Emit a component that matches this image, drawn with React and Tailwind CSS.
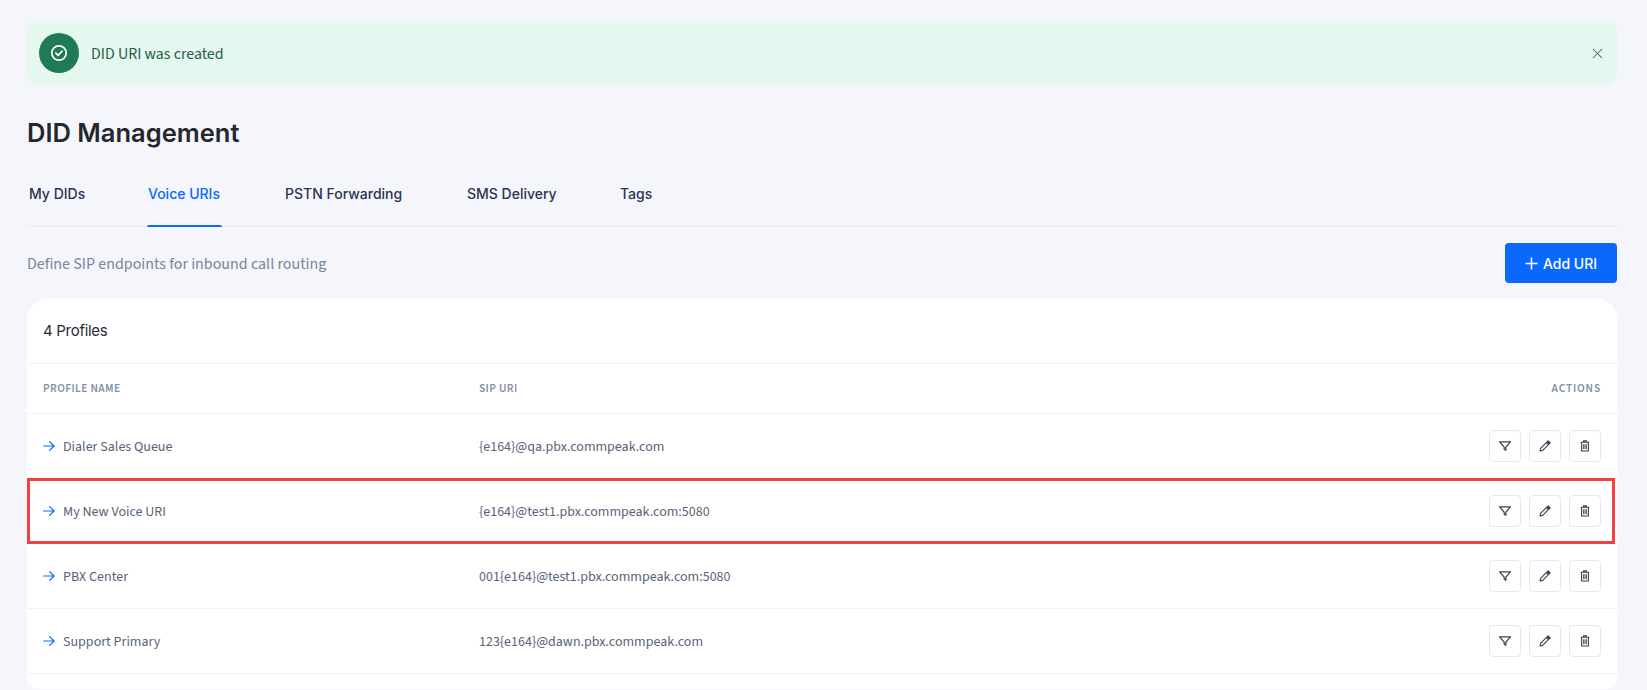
import React from "react";

const body = "font-['Source_Sans_3','Noto_Sans','Open_Sans',sans-serif]";
const head = "font-['Inter','Noto_Sans',sans-serif]";

const rows = [
  ["Dialer Sales Queue", "{e164}@qa.pbx.commpeak.com"],
  ["My New Voice URI", "{e164}@test1.pbx.commpeak.com:5080", true],
  ["PBX Center", "001{e164}@test1.pbx.commpeak.com:5080"],
  ["Support Primary", "123{e164}@dawn.pbx.commpeak.com"],
];

const tabs = [
  ["My DIDs", false, "w-[119px]"],
  ["Voice URIs", true, "w-[137px]"],
  ["PSTN Forwarding", false, "w-[182px]"],
  ["SMS Delivery", false, "w-[153px]"],
  ["Tags", false, "w-[50px]"],
];

function Filter() {
  return (
    <svg width="14" height="14" viewBox="0 0 14 14" fill="none" stroke="#3a3f55" strokeWidth="1.25" strokeLinejoin="round">
      <path d="M1.6 2.8h10.8L7.9 8.1v3.1L6.2 10.2V8.1z" />
    </svg>
  );
}
function Pencil() {
  return (
    <svg width="14" height="14" viewBox="0 0 14 14" fill="none" stroke="#3a3f55" strokeWidth="1.1" strokeLinejoin="round">
      <path d="M2 12l.6-2.7 5.7-5.7 2.1 2.1-5.7 5.7z" />
      <path d="M9 2.9l1.1-1.1 2.1 2.1-1.1 1.1z" fill="#3a3f55" />
    </svg>
  );
}
function Trash() {
  return (
    <svg width="14" height="14" viewBox="0 0 14 14" fill="none" stroke="#3a3f55" strokeWidth="1.1" strokeLinejoin="round">
      <path d="M2.8 3.2h8.4M5.5 3V1.9h3V3M3.6 3.2v8.8h6.8V3.2" />
      <path d="M5.6 5.2v5M7 5.2v5M8.4 5.2v5" strokeWidth="0.9" />
    </svg>
  );
}

function ActionBtn({ children }) {
  return (
    <button className="w-8 h-8 rounded-[4px] bg-white border border-[#e4e8f0] flex items-center justify-center">
      {children}
    </button>
  );
}

export default function App() {
  return (
    <div className={`h-[690px] overflow-hidden bg-[#f4f6fb] pl-[27px] pr-[30px] pt-[21px] ${body}`}>
      <div className="h-16 rounded-[10px] bg-[#e4f8f0] pl-3 pr-[14px] flex items-center">
        <div className="w-10 h-10 rounded-full bg-[#1f7a58] flex items-center justify-center">
          <svg width="18" height="18" viewBox="0 0 18 18" fill="none" stroke="#fff" strokeWidth="1.7" strokeLinecap="round" strokeLinejoin="round">
            <circle cx="9" cy="9" r="7.2" />
            <path d="M5.9 9.2l2.2 2.1 4-4.1" />
          </svg>
        </div>
        <span className="ml-3 pt-[4px] text-[15.9px] text-[#2c5c4a]">DID URI was created</span>
        <svg className="ml-auto" width="11" height="11" viewBox="0 0 12 12" stroke="#5f7a70" strokeWidth="1.1">
          <path d="M1 1l10 10M11 1L1 11" />
        </svg>
      </div>

      <h1 className={`mt-[30px] text-[25.5px] leading-[36px] font-semibold text-[#26272e] ${head}`}>DID Management</h1>

      <div className={`mt-[31px] h-[45px] border-b-2 border-[#edf1f5] flex pl-[2px] text-[14px] font-medium ${head}`}>
        {tabs.map(([label, active, w]) => (
          <div key={label} className={`${w} h-[45px] relative`}>
            <span className={`block leading-[22px] pt-[1px] ${active ? "text-[#0b68ff]" : "text-[#2d3350]"}`}>{label}</span>
            {active && <div className="absolute left-[-1px] top-[43px] w-[75px] h-[2px] bg-[#0b68ff] rounded-t" />}
          </div>
        ))}
      </div>

      <div className="mt-[16px] flex items-center justify-between h-10">
        <span className="pt-[2px] text-[16px] text-[#79849b]">Define SIP endpoints for inbound call routing</span>
        <button className={`w-[112px] h-10 rounded-[4px] bg-[#0b68ff] text-white text-[14px] font-medium flex items-center justify-center gap-[5px] ${head}`}>
          <svg width="13" height="13" viewBox="0 0 13 13" stroke="#fff" strokeWidth="1.5"><path d="M6.5 0.5v12M0.5 6.5h12" /></svg>
          Add URI
        </button>
      </div>

      <div className="mt-4 bg-white rounded-t-[20px] rounded-b-[10px] h-[390px]">
        <div className={`h-[64px] px-4 flex items-center text-[15px] text-[#2a2b33] tracking-[-0.3px] ${head}`}>4 Profiles</div>
        <div className="border-t border-[#edf0f4] h-[50px] px-4 grid grid-cols-[436px_1fr_120px] items-center text-[11.4px] font-semibold tracking-[0.4px] text-[#8390a8]">
          <span>PROFILE NAME</span>
          <span>SIP URI</span>
          <span className="text-right tracking-[0.85px]">ACTIONS</span>
        </div>
        {rows.map(([name, uri, hi]) => (
          <div key={name} className="relative border-t border-[#edf0f4] last:border-b h-[65px] last:h-[66px] px-4 grid grid-cols-[436px_1fr_120px] items-center text-[14px] text-[#59647a]">
            <div className="flex items-center gap-[8px]">
              <svg width="12" height="12" viewBox="0 0 13 12" fill="none" stroke="#0b68ff" strokeWidth="1.3" strokeLinecap="round" strokeLinejoin="round">
                <path d="M0.8 6h11.2M7.2 1.2L12 6l-4.8 4.8" />
              </svg>
              <span className="pt-[2px]">{name}</span>
            </div>
            <span className="pt-[2px]">{uri}</span>
            <div className="flex justify-end gap-2">
              <ActionBtn><Filter /></ActionBtn>
              <ActionBtn><Pencil /></ActionBtn>
              <ActionBtn><Trash /></ActionBtn>
            </div>
            {hi && <div className="absolute z-10 left-0 right-[2px] top-[-1px] h-[66px] border-[3px] border-[#f34141] pointer-events-none" />}
          </div>
        ))}
      </div>
    </div>
  );
}
